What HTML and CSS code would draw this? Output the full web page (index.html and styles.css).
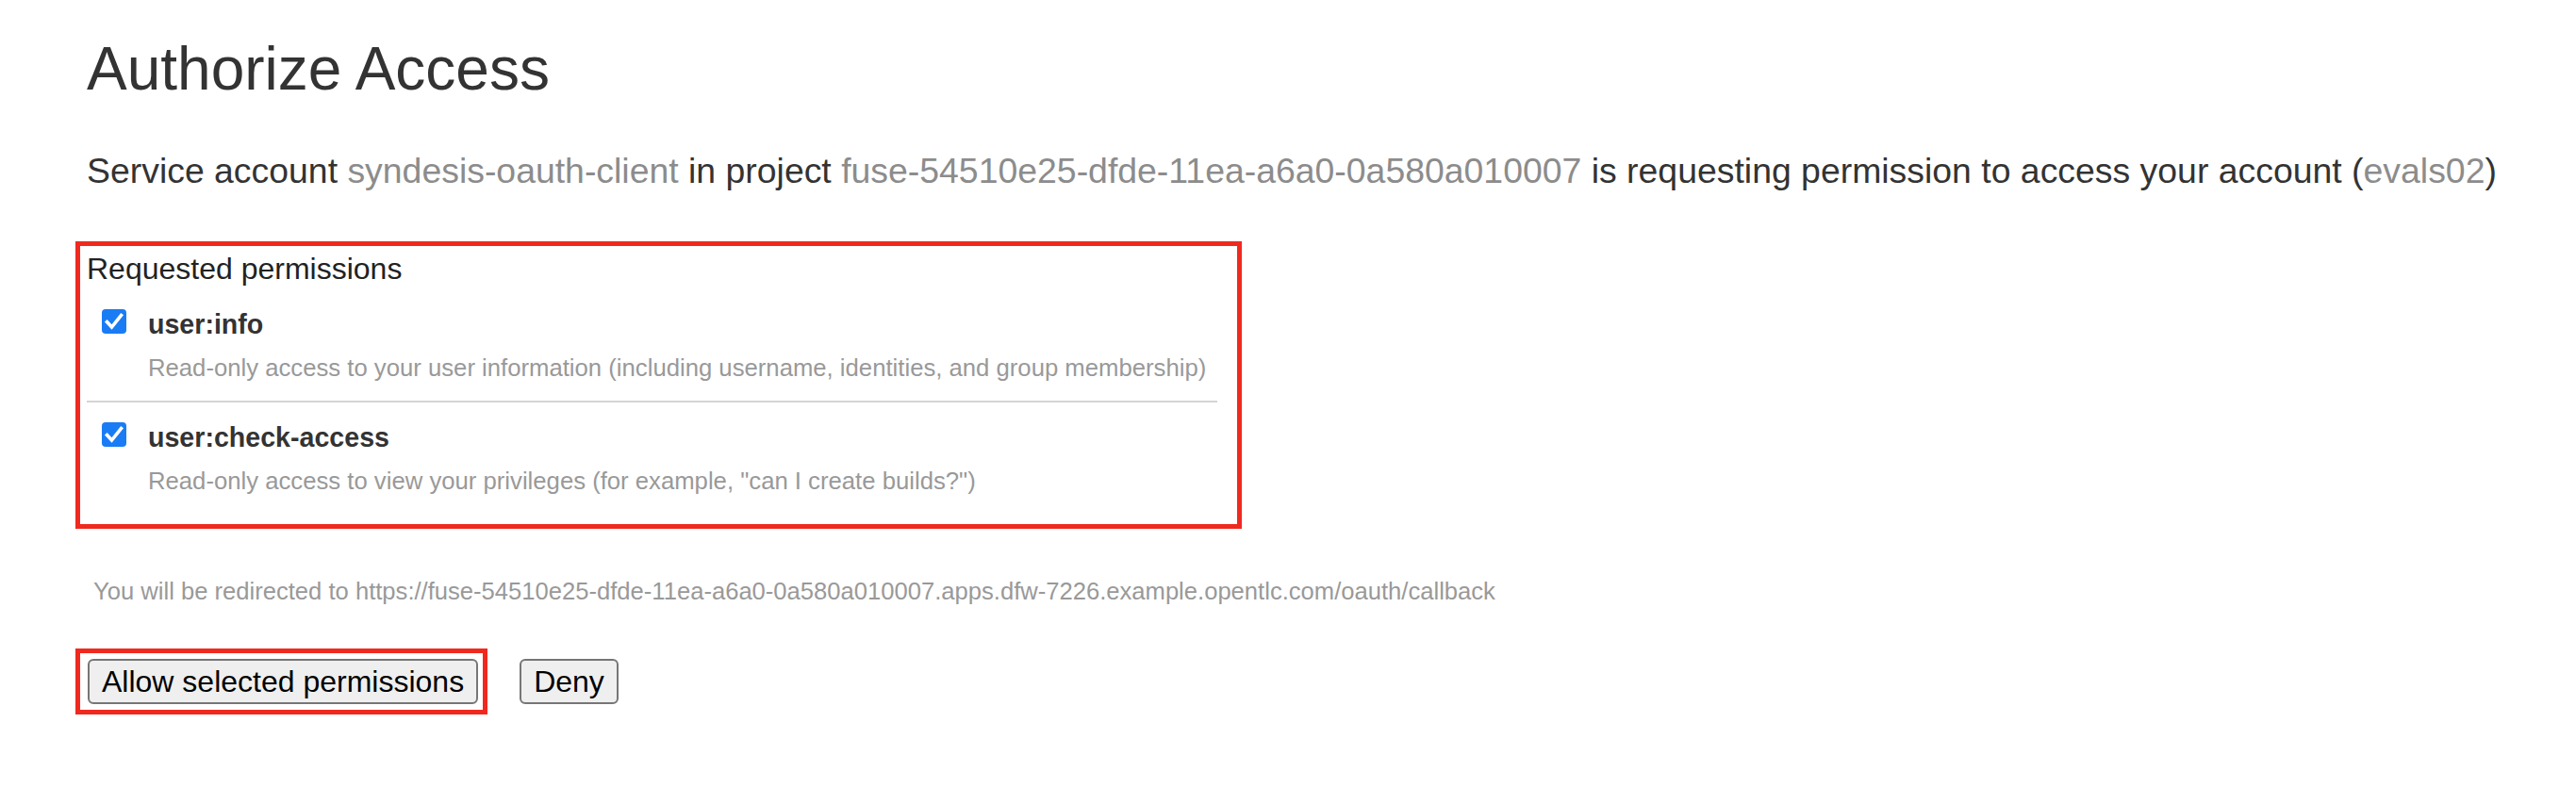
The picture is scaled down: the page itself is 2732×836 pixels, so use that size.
FILE: index.html
```html
<!DOCTYPE html>
<html lang="en">
<head>
<meta charset="utf-8">
<title>Authorize Access</title>
<link rel="stylesheet" href="styles.css">
</head>
<body>
<main class="page">
  <h1 class="title">Authorize Access</h1>
  <p class="intro">Service account <span class="muted">syndesis-oauth-client</span> in project <span class="muted">fuse-54510e25-dfde-11ea-a6a0-0a580a010007</span> is requesting permission to access your account (<span class="muted">evals02</span>)</p>

  <section class="perm-box">
    <div class="perm-legend">Requested permissions</div>
    <div class="perm-item first">
      <span class="check"><svg viewBox="0 0 26 26" width="26" height="26"><rect x="0" y="0" width="26" height="26" rx="4" fill="#1a7cf5"/><path d="M5.5 13.5 L10.5 19 L20.5 6.5" fill="none" stroke="#fff" stroke-width="3.6" stroke-linecap="square" stroke-linejoin="miter"/></svg></span>
      <div class="perm-text">
        <div class="perm-name">user:info</div>
        <div class="perm-desc">Read-only access to your user information (including username, identities, and group membership)</div>
      </div>
    </div>
    <div class="perm-item last">
      <span class="check"><svg viewBox="0 0 26 26" width="26" height="26"><rect x="0" y="0" width="26" height="26" rx="4" fill="#1a7cf5"/><path d="M5.5 13.5 L10.5 19 L20.5 6.5" fill="none" stroke="#fff" stroke-width="3.6" stroke-linecap="square" stroke-linejoin="miter"/></svg></span>
      <div class="perm-text">
        <div class="perm-name">user:check-access</div>
        <div class="perm-desc">Read-only access to view your privileges (for example, "can I create builds?")</div>
      </div>
    </div>
  </section>

  <p class="redirect">You will be redirected to https://fuse-54510e25-dfde-11ea-a6a0-0a580a010007.apps.dfw-7226.example.opentlc.com/oauth/callback</p>

  <div class="actions">
    <div class="highlight"><button class="btn" type="button">Allow selected permissions</button></div>
    <button class="btn" type="button">Deny</button>
  </div>
</main>
</body>
</html>
```

FILE: styles.css
```css
html, body {
  margin: 0;
  padding: 0;
  background: #ffffff;
}

body {
  font-family: "Liberation Sans", Helvetica, Arial, sans-serif;
  color: #333333;
}

.page {
  padding: 36px 0 0 92px;
}

.title {
  margin: 0;
  font-size: 64px;
  line-height: 74px;
  font-weight: 400;
  color: #333333;
}

.intro {
  margin: 49px 0 0 0;
  font-size: 37.4px;
  line-height: 44px;
  color: #333333;
  white-space: nowrap;
}

.muted {
  color: #8c8c8c;
}

.perm-box {
  width: 1199px;
  margin: 53px 0 0 -12px;
  border: 5px solid #f0291f;
  padding: 5px 21px 11px 7px;
}

.perm-legend {
  font-size: 32px;
  line-height: 38px;
  color: #222222;
}

.perm-item {
  display: flex;
  align-items: flex-start;
  padding: 21px 0 19px 0;
}

.perm-item.first {
  padding-top: 23px;
  border-bottom: 2px solid #d4d4d4;
}

.perm-item.last {
  padding-top: 20px;
}

.check {
  display: block;
  width: 26px;
  height: 26px;
  margin: 1px 23px 0 16px;
  flex: none;
}

.check svg {
  display: block;
}

.perm-text {
  display: flex;
  flex-direction: column;
  min-width: 0;
}

.perm-name {
  font-size: 28.6px;
  line-height: 34px;
  font-weight: 700;
  color: #333333;
}

.perm-desc {
  margin-top: 13px;
  font-size: 25.7px;
  line-height: 32px;
  color: #999999;
  white-space: nowrap;
}

.redirect {
  margin: 50px 0 0 7px;
  font-size: 25.6px;
  line-height: 32px;
  color: #999999;
  white-space: nowrap;
}

.actions {
  display: flex;
  align-items: center;
  margin: 45px 0 0 -12px;
}

.highlight {
  border: 5px solid #f0291f;
  padding: 6px 5px 6px 8px;
  margin-right: 34px;
}

.btn {
  display: block;
  font-family: "Liberation Sans", Helvetica, Arial, sans-serif;
  font-size: 32px;
  line-height: 40px;
  height: 48px;
  padding: 2px 13px;
  color: #000000;
  background: #efefef;
  border: 2px solid #767676;
  border-radius: 6px;
}
```
